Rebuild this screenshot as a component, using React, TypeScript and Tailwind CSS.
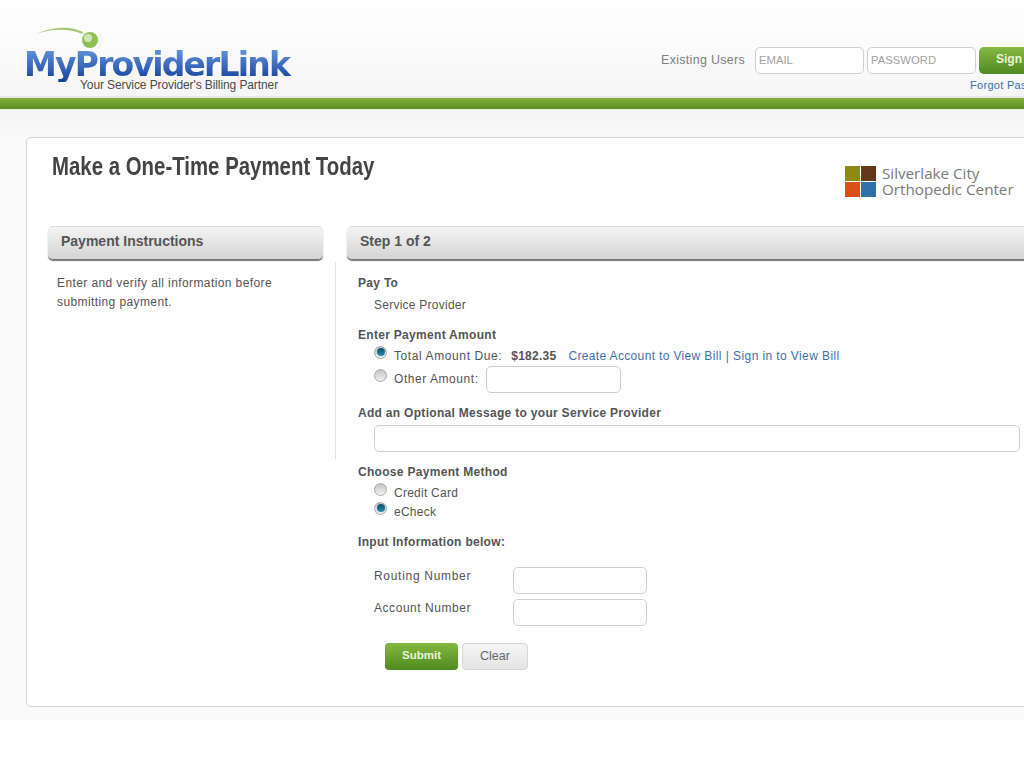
import React from "react";

const body = "font-['Liberation_Sans',Arial,sans-serif]";

function Radio({ checked }: { checked?: boolean }) {
  return (
    <span className="mb-[7px] flex h-[13px] w-[13px] shrink-0 items-center justify-center rounded-full border border-[#a9a9a9] bg-gradient-to-b from-[#c4c4c4] to-[#f2f2f2]">
      {checked && (
        <span className="h-[8px] w-[8px] rounded-full bg-gradient-to-b from-[#0f4f6b] to-[#2a8fa8]" />
      )}
    </span>
  );
}

function TextBox({ className, placeholder }: { className: string; placeholder?: string }) {
  return (
    <div
      className={`flex h-[27px] shrink-0 items-center rounded-[5px] border border-[#cfcfcf] bg-white pl-[3px] text-[11.3px] text-[#a3a3a3] ${className}`}
    >
      {placeholder}
    </div>
  );
}

function SectionBar({ title, className }: { title: string; className: string }) {
  return (
    <div
      className={`flex h-[33px] items-center rounded-[5px] border-t border-[#dcdcdc] bg-gradient-to-b from-[#f4f4f4] to-[#d4d4d4] pb-[3px] pl-[13px] text-[14px] font-bold text-[#555] shadow-[0_2px_1px_#777] ${className}`}
    >
      {title}
    </div>
  );
}

function Logo() {
  return (
    <div className="flex w-[270px] flex-col">
      <svg width="64" height="24" viewBox="0 0 64 24" className="ml-[10px]">
        <path d="M0 9 C14 2 34 0 47 7 L46 9 C33 3 14 4 0 9 Z" fill="#a5c86f" />
        <circle cx="54" cy="15" r="8" fill="#8fbf55" />
        <circle cx="52" cy="13" r="4" fill="#d3e8ba" />
      </svg>
      <div className="mt-[-3px] ml-[-2px] flex h-[36px] items-center bg-gradient-to-b from-[#6d9be0] to-[#123f9c] bg-clip-text font-['DejaVu_Sans',sans-serif] text-[33px] leading-none font-bold tracking-[-1.8px] whitespace-nowrap text-transparent">
        MyProviderLink
      </div>
      <div className="mt-[-4px] pl-[54px] text-[12px] leading-[14px] tracking-[-0.1px] whitespace-nowrap text-[#4b4b4b]">
        Your Service Provider's Billing Partner
      </div>
    </div>
  );
}

function ClientLogo() {
  return (
    <div className="flex items-center gap-[6px]">
      <div className="grid grid-cols-2 gap-[1px]">
        <span className="h-[15px] w-[15px] bg-[#8c8a14]" />
        <span className="h-[15px] w-[15px] bg-[#64391a]" />
        <span className="h-[15px] w-[15px] bg-[#d9501a]" />
        <span className="h-[15px] w-[15px] bg-[#2f72a8]" />
      </div>
      <div className="font-['Open_Sans',sans-serif] text-[15.2px] leading-[16px] whitespace-nowrap text-[#7b7b7b]">
        <div>Silverlake City</div>
        <div>Orthopedic Center</div>
      </div>
    </div>
  );
}

function Row({ className, children }: { className: string; children: React.ReactNode }) {
  return <div className={`flex items-center whitespace-nowrap ${className}`}>{children}</div>;
}

const heading = "tracking-[0.3px] font-bold";

export default function App() {
  return (
    <div className={`h-[768px] w-[1024px] overflow-hidden bg-white ${body} text-[12px] text-[#555]`}>
      <header className="flex h-[96px] bg-gradient-to-b from-white to-[#f6f6f6] pl-[26px]">
        <div className="pt-[25px]">
          <Logo />
        </div>
        <div className="ml-[365px] flex w-[400px] shrink-0 flex-col pt-[47px]">
          <div className="flex items-center">
            <span className="w-[94px] text-[12.5px] tracking-[0.3px] text-[#808080]">Existing Users</span>
            <TextBox className="w-[109px]" placeholder="EMAIL" />
            <TextBox className="ml-[3px] w-[109px]" placeholder="PASSWORD" />
            <div className="ml-[3px] flex h-[27px] w-[60px] items-center rounded-[5px] bg-gradient-to-b from-[#86b843] to-[#4f8a20] pb-[3px] pl-[17px] text-[12px] font-bold text-[#e8f5d5]">
              Sign
            </div>
          </div>
          <div className="mt-[3px] pl-[309px] text-[11px] tracking-[0.3px] whitespace-nowrap text-[#3f6fa8]">
            Forgot Password?
          </div>
        </div>
      </header>

      <div className="h-[2px] bg-[#e6e6e6]" />
      <div className="h-[12px] border-b border-[#e9f0de] bg-gradient-to-b from-[#82b13c] to-[#5b8f22]" />

      <main className="h-[610px] bg-gradient-to-b from-[#f3f3f3] to-[#fafafa] to-[5%] pl-[26px] pt-[27px]">
        <div className="w-[1040px] rounded-[5px] border border-[#d4d4d4] bg-white">
          <div className="flex h-[88px]">
            <div className="w-[818px] pl-[25px] pt-[10px]">
              <h1 className="origin-left scale-x-[0.77] font-['Liberation_Sans',sans-serif] text-[26.5px] leading-[36px] font-bold whitespace-nowrap text-[#444]">
                Make a One-Time Payment Today
              </h1>
            </div>
            <div className="pt-[27px]">
              <ClientLogo />
            </div>
          </div>

          <div className="flex h-[480px] pl-[21px]">
            <div className="w-[287px] shrink-0">
              <SectionBar title="Payment Instructions" className="w-[275px]" />
              <p className="mt-[15px] w-[240px] pl-[9px] text-[12px] leading-[19px] tracking-[0.4px]">
                Enter and verify all information before submitting payment.
              </p>
            </div>
            <div className="mt-[36px] h-[197px] w-[12px] shrink-0 border-l border-[#e3e3e3]" />
            <div className="flex-1">
              <SectionBar title="Step 1 of 2" className="w-full" />
              <div className="pl-[11px] pt-[14px] tracking-[0.25px]">
                <Row className={`h-[20px] ${heading}`}>Pay To</Row>
                <Row className="mt-[2px] h-[20px] pl-[16px]">Service Provider</Row>

                <Row className={`mt-[10px] h-[20px] ${heading}`}>Enter Payment Amount</Row>
                <Row className="h-[21px] pl-[16px]">
                  <Radio checked />
                  <span className="ml-[7px] tracking-[0.6px]">Total Amount Due:</span>
                  <span className="ml-[9px] font-bold">$182.35</span>
                  <span className="ml-[12px] tracking-[0.35px] text-[#3f6fa8]">Create Account to View Bill</span>
                  <span className="mx-[4px] text-[#3f6fa8]">|</span>
                  <span className="tracking-[0.4px] text-[#3f6fa8]">Sign in to View Bill</span>
                </Row>
                <Row className="mt-[2px] h-[21px] pl-[16px]">
                  <Radio />
                  <span className="ml-[7px] tracking-[0.55px]">Other Amount:</span>
                  <TextBox className="ml-[7px] mt-[2px] w-[135px]" />
                </Row>

                <Row className={`mt-[14px] h-[20px] ${heading}`}>Add an Optional Message to your Service Provider</Row>
                <div className="mt-[2px] pl-[16px]">
                  <TextBox className="w-[646px]" />
                </div>

                <Row className={`mt-[10px] h-[20px] ${heading}`}>Choose Payment Method</Row>
                <Row className="h-[21px] pl-[16px]">
                  <Radio />
                  <span className="ml-[7px]">Credit Card</span>
                </Row>
                <Row className="mt-[-2px] h-[21px] pl-[16px]">
                  <Radio checked />
                  <span className="ml-[7px]">eCheck</span>
                </Row>

                <Row className={`mt-[10px] h-[20px] ${heading}`}>Input Information below:</Row>
                <Row className="mt-[15px] h-[27px] pl-[16px]">
                  <span className="w-[139px] pb-[10px] tracking-[0.7px]">Routing Number</span>
                  <TextBox className="w-[134px]" />
                </Row>
                <Row className="mt-[5px] h-[27px] pl-[16px]">
                  <span className="w-[139px] pb-[10px] tracking-[0.55px]">Account Number</span>
                  <TextBox className="w-[134px]" />
                </Row>

                <Row className="mt-[17px] pl-[27px]">
                  <div className="flex h-[27px] w-[73px] items-center justify-center rounded-[4px] bg-gradient-to-b from-[#84b83f] to-[#4f8a20] pb-[2px] text-[11.5px] font-bold tracking-normal text-[#e8f5d5]">
                    Submit
                  </div>
                  <div className="ml-[4px] flex h-[27px] w-[66px] items-center justify-center rounded-[4px] border border-[#d6d6d6] bg-gradient-to-b from-[#f5f5f5] to-[#e4e4e4] text-[12.5px] tracking-normal text-[#666]">
                    Clear
                  </div>
                </Row>
              </div>
            </div>
          </div>
        </div>
      </main>
    </div>
  );
}
